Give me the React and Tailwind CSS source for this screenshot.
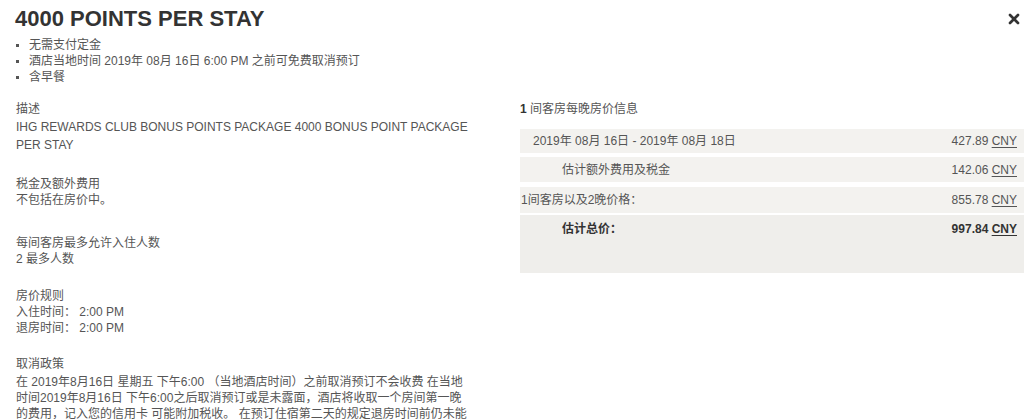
import { X } from "lucide-react";

const font = {
  fontFamily: '"Liberation Sans", "Noto Sans CJK SC", sans-serif',
};

const perks = ["无需支付定金", "酒店当地时间 2019年 08月 16日 6:00 PM 之前可免费取消预订", "含早餐"];

function Section({ title, className, children }) {
  return (
    <div className={className}>
      <div className="leading-[16px]">{title}</div>
      {children}
    </div>
  );
}

function Price({ value, bold }) {
  return (
    <span className={bold ? "font-bold text-[#333]" : ""}>
      {value} <span className="underline underline-offset-2">CNY</span>
    </span>
  );
}

export default function App() {
  return (
    <div className="h-[419px] overflow-hidden bg-white text-[12px] text-[#555]" style={font}>
      <div className="flex items-start justify-between pl-[15px] pr-[6px] pt-[5px]">
        <h1 className="text-[22px] font-bold leading-[28px] text-[#333]">4000 POINTS PER STAY</h1>
        <button className="mt-[6px] text-[#333]">
          <X size={16} strokeWidth={4} />
        </button>
      </div>

      <ul className="mt-[4px] pl-[16px] leading-[16px]">
        {perks.map((p) => (
          <li key={p} className="flex items-center">
            <span className="mr-[10px] h-[3px] w-[3px] bg-[#555]" />
            {p}
          </li>
        ))}
      </ul>

      <div className="mt-[15px] flex pl-[16px]">
        <div className="w-[470px] shrink-0">
          <div className="leading-[18px]">
            <div>描述</div>
            <div>
              IHG REWARDS CLUB BONUS POINTS PACKAGE 4000 BONUS POINT PACKAGE
              <br />
              PER STAY
            </div>
          </div>

          <Section title="税金及额外费用" className="mt-[22px]">
            <div className="leading-[16px]">不包括在房价中。</div>
          </Section>

          <Section title="每间客房最多允许入住人数" className="mt-[27px]">
            <div className="leading-[16px]">2 最多人数</div>
          </Section>

          <Section title="房价规则" className="mt-[21px]">
            <div className="leading-[16px]">
              入住时间： 2:00 PM
              <br />
              退房时间： 2:00 PM
            </div>
          </Section>

          <Section title="取消政策" className="mt-[20px]">
            <div className="mt-[2px] whitespace-nowrap leading-[16px]">
              在 2019年8月16日 星期五 下午6:00 （当地酒店时间）之前取消预订不会收费 在当地
              <br />
              时间2019年8月16日 下午6:00之后取消预订或是未露面，酒店将收取一个房间第一晚
              <br />
              的费用，记入您的信用卡 可能附加税收。 在预订住宿第二天的规定退房时间前仍未能
            </div>
          </Section>
        </div>

        <div className="ml-[34px] w-[504px]">
          <div className="leading-[18px]">
            <span className="font-bold text-[#333]">1</span> 间客房每晚房价信息
          </div>

          <div className="mt-[11px] flex flex-col">
            <div className="flex h-[24px] items-center justify-between bg-[#f3f2ef] pl-[13px] pr-[7px]">
              <span>2019年 08月 16日 - 2019年 08月 18日</span>
              <Price value="427.89" />
            </div>
            <div className="mt-[4px] flex h-[25px] items-center justify-between bg-[#f3f2ef] pl-[42px] pr-[7px]">
              <span>估计额外费用及税金</span>
              <Price value="142.06" />
            </div>
            <div className="mt-[5px] flex h-[26px] items-center justify-between bg-[#f3f2ef] pl-[1px] pr-[7px]">
              <span>1间客房以及2晚价格：</span>
              <Price value="855.78" />
            </div>
            <div className="mt-[2px] h-[58px] bg-[#efeeeb] pl-[42px] pr-[7px] pt-[6px]">
              <div className="flex items-center justify-between leading-[16px]">
                <span className="font-bold text-[#333]">估计总价：</span>
                <Price value="997.84" bold />
              </div>
            </div>
          </div>
        </div>
      </div>
    </div>
  );
}
